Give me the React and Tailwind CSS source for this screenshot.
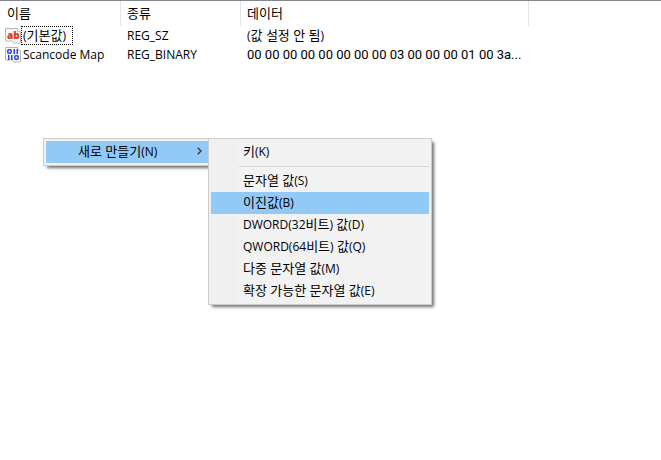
const columns = [
	{ label: "이름", width: "w-[121px]", pad: "pl-[7px]" },
	{ label: "종류", width: "w-[120px]", pad: "pl-1.5" },
	{ label: "데이터", width: "w-[288px]", pad: "pl-1.5" },
];

const values = [
	{ name: "(기본값)", type: "REG_SZ", data: "(값 설정 안 됨)", Icon: StringIcon, focused: true },
	{
		name: "Scancode Map",
		type: "REG_BINARY",
		data: "00 00 00 00 00 00 00 00 03 00 00 00 01 00 3a...",
		Icon: BinaryIcon,
	},
];

const valueTypes = [
	"문자열 값(S)",
	"이진값(B)",
	"DWORD(32비트) 값(D)",
	"QWORD(64비트) 값(Q)",
	"다중 문자열 값(M)",
	"확장 가능한 문자열 값(E)",
];

// Hangul is set one size larger than the Latin text beside it
function Label({ text }) {
	return (
		<span className="whitespace-pre">
			{text.split(/([가-힣 ]*[가-힣][가-힣 ]*)/).map((part, i) =>
				i % 2 ? (
					<span key={i} className="text-[13px] leading-4">
						{part}
					</span>
				) : (
					part
				),
			)}
		</span>
	);
}

function Paper({ children }) {
	return (
		<svg viewBox="0 0 16 16" className="size-4 shrink-0" aria-hidden="true">
			<path
				d="M.5 .5H12.5L15.5 3.5V14.5L13.5 15.5L11.5 14.5L9.5 15.5L7.5 13.5L5.5 12.5L3.5 13.5L.5 12.5Z"
				fill="#f6f6f6"
				stroke="#b4b4b4"
			/>
			<path d="M12.5 .5V3.5H15.5" fill="#fff" stroke="#c4c4c4" />
			{children}
		</svg>
	);
}

function StringIcon() {
	return (
		<Paper>
			<text x="2" y="11" fontSize="10" fontWeight="800" fill="#d8401c" className="font-['Open_Sans',sans-serif]">
				ab
			</text>
		</Paper>
	);
}

function BinaryIcon() {
	return (
		<Paper>
			<g fill="none" stroke="#2a45d8" strokeWidth="1.5">
				<rect x="2.75" y="2.75" width="3.5" height="3.5" rx="1.2" />
				<path d="M9.25 2V7M12.25 2V7" />
				<path d="M3.75 8V13M6.75 8V13" />
				<rect x="9.75" y="8.75" width="3.5" height="3.5" rx="1.2" />
			</g>
		</Paper>
	);
}

function MenuItem({ label, active }) {
	return (
		<button
			type="button"
			role="menuitem"
			className={`flex h-[22px] w-full items-center pb-0.5 pl-8 text-left ${active ? "bg-[#91c9f7]" : ""}`}
		>
			<Label text={label} />
		</button>
	);
}

function ContextMenu() {
	return (
		<div className="absolute top-[137px] left-[43px] flex items-start" role="menu">
			<div className="w-[165px] border border-r-0 border-[#ccc] bg-[#f2f2f2] py-0.5 pl-0.5 shadow-[3px_3px_3px_-1px_#707070]">
				<button
					type="button"
					role="menuitem"
					aria-haspopup="menu"
					aria-expanded="true"
					className="flex h-[22px] w-full items-center justify-between bg-[#91c9f7] pr-1.5 pb-0.5 pl-8"
				>
					<Label text="새로 만들기(N)" />
					<svg viewBox="0 0 5 8" className="h-2 w-[5px]" aria-hidden="true">
						<path d="M.7 .7L4 4L.7 7.3" fill="none" stroke="#333" strokeWidth="1.3" />
					</svg>
				</button>
			</div>
			<div
				role="menu"
				className="relative w-56 border border-[#ccc] bg-linear-to-r from-[#f0f0f0] from-[29px] to-[#f2f2f2] to-[29px] p-0.5 shadow-[3px_3px_3px_-1px_#707070]"
			>
				<MenuItem label="키(K)" />
				<hr className="my-[3px] ml-7 border-[#d7d7d7]" />
				{valueTypes.map((label) => (
					<MenuItem key={label} label={label} active={label === "이진값(B)"} />
				))}
			</div>
		</div>
	);
}

export default function App() {
	return (
		<main className="relative min-h-screen border-t border-[#828790] bg-white font-['Open_Sans','Noto_Sans_CJK_KR',sans-serif] text-[12px] leading-4 text-black">
			<table className="w-[529px] table-fixed border-separate border-spacing-0">
				<thead>
					<tr>
						{columns.map((col) => (
							<th
								key={col.label}
								scope="col"
								className={`${col.width} ${col.pad} h-[25px] border-r border-[#e5e5e5] py-0 pr-0 text-left font-normal`}
							>
								<Label text={col.label} />
							</th>
						))}
					</tr>
				</thead>
				<tbody className="whitespace-nowrap">
					{values.map(({ name, type, data, Icon, focused }) => (
						<tr key={name}>
							<td className="h-[19px] p-0 pl-[5px]">
								<div className="flex h-[19px] items-center">
									<Icon />
									<span
										className={`flex h-[19px] items-center border border-dotted pr-1.5 pl-px ${focused ? "border-black" : "border-transparent"}`}
									>
										<Label text={name} />
									</span>
								</div>
							</td>
							<td className="p-0 pl-1.5">{type}</td>
							<td className="p-0 pl-1.5">
								{focused ? (
									<Label text={data} />
								) : (
									<span className="font-[Roboto,sans-serif] text-[13px] leading-4">{data}</span>
								)}
							</td>
						</tr>
					))}
				</tbody>
			</table>
			<ContextMenu />
		</main>
	);
}
